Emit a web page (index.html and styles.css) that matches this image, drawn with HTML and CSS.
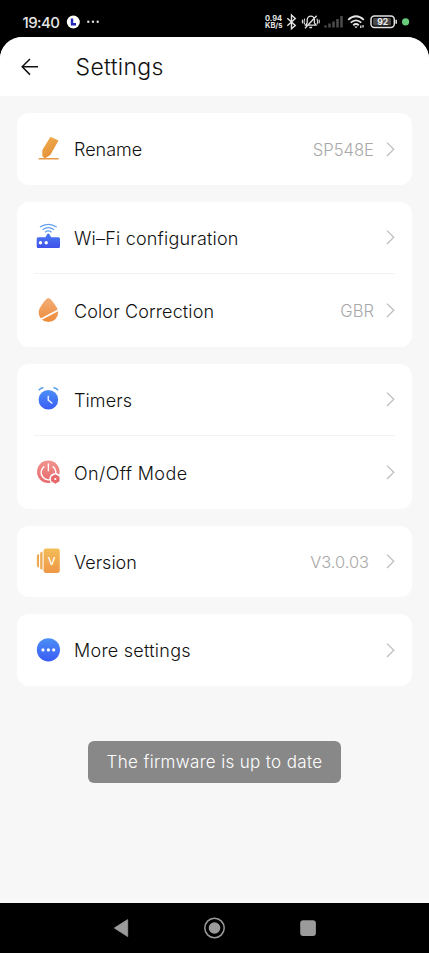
FILE: index.html
```html
<!DOCTYPE html>
<html lang="en">
<head>
<meta charset="utf-8">
<title>Settings</title>
<link rel="stylesheet" href="styles.css">
</head>
<body>
<svg class="defs" aria-hidden="true">
  <defs>
    <linearGradient id="orange" x1="0" y1="0" x2="0.5" y2="1"><stop offset="0" stop-color="#efb050"/><stop offset="1" stop-color="#e58f38"/></linearGradient>
    <linearGradient id="peach" x1="0" y1="0" x2="0" y2="1"><stop offset="0" stop-color="#f2ae78"/><stop offset="1" stop-color="#ee8b3a"/></linearGradient>
    <linearGradient id="gold" x1="0" y1="0" x2="0" y2="1"><stop offset="0" stop-color="#f3bd58"/><stop offset="1" stop-color="#ee9745"/></linearGradient>
    <linearGradient id="blue" x1="0" y1="0" x2="0" y2="1"><stop offset="0" stop-color="#4b8ff5"/><stop offset="1" stop-color="#3a5cf5"/></linearGradient>
    <linearGradient id="indigo" x1="0" y1="0" x2="0" y2="1"><stop offset="0" stop-color="#4a7cf2"/><stop offset="1" stop-color="#3f50ea"/></linearGradient>
    <linearGradient id="red" x1="0" y1="0" x2="0" y2="1"><stop offset="0" stop-color="#f09490"/><stop offset="1" stop-color="#e8686a"/></linearGradient>
    <symbol id="chevron" viewBox="0 0 9 16"><path d="M1 1.6 7.8 8.3 1 15" fill="none" stroke="#bcbcbc" stroke-width="1.2"/></symbol>
  </defs>
</svg>
<div class="status">
  <span class="time">19:40</span>
  <svg class="status-left" width="36" height="16" viewBox="0 0 36 16">
    <circle cx="7.3" cy="8" r="6.5" fill="#fff"/>
    <path d="M6 4.5v5.8h4" fill="none" stroke="#2027b8" stroke-width="2.4"/>
    <g fill="#ddd"><circle cx="22.3" cy="7.8" r="1.2"/><circle cx="27" cy="7.8" r="1.2"/><circle cx="31.7" cy="7.8" r="1.2"/></g>
  </svg>
  <div class="speed"><span>0.94</span><span>KB/s</span></div>
  <svg class="status-right" width="126" height="20" viewBox="285 12 126 20" fill="none" stroke="#e4e4e4">
    <path d="M287.3 18.2 295.3 25.4 291.5 28.8V15L295.3 18.4 287.3 25.8" stroke-width="1.4"/>
    <path d="M305.6 25.2H316l-1.6-2.3v-3.2a3.6 3.6 0 0 0-7.2 0v3.2zM309.3 27.5h2.8M305 28.3 316.6 15.8" stroke-width="1.3"/>
    <path d="M304.6 18.6q-1 3 0 5.8M302.6 19.7q-.6 1.8 0 3.6M317 18.6q1 3 0 5.8M319 19.7q.6 1.8 0 3.6" stroke-width="1.1"/>
    <path d="M325.5 27.6v-2.2M329.5 27.6v-4.2M333.5 27.6v-6.2M337.5 27.6v-8.6M341.5 27.6V16" stroke="#4c4c4c" stroke-width="2.5"/>
    <path d="M348.2 19.8q7.8-7 15.6 0M350.7 22.7q5.3-4.7 10.6 0M353.2 25.2q2.8-2.4 5.6 0" stroke-width="1.8"/>
    <path d="M356 28.2l-1.7-1.8h3.4z" fill="#e4e4e4" stroke="none"/>
    <path d="M360.8 28v-2.6M363 25v2.6" stroke-width="1.3"/>
    <rect x="371" y="16" width="23.3" height="11.4" rx="3.4" stroke-width="1.5"/>
    <rect x="373" y="18" width="18" height="7.4" rx="1.4" fill="#484848" stroke="none"/>
    <path d="M396.2 19.8v4" stroke-width="1.5"/>
    <text class="battery" x="382.7" y="25.1" text-anchor="middle">92</text>
    <circle cx="405.6" cy="21.8" r="3.6" fill="#69cc7b" stroke="none"/>
  </svg>
</div>

<main class="screen">
  <header class="header">
    <svg width="18" height="18" viewBox="0 0 18 18"><path d="M17 8.8H1.2M9 1 1.2 8.8 9 16.6" fill="none" stroke="#111" stroke-width="1.5"/></svg>
    <h1>Settings</h1>
  </header>

  <div class="list">
    <section class="card">
      <div class="row">
        <svg class="icon" viewBox="0 0 28 28"><path d="M17 2 24 5.2q.6.3.2.9L16.3 20 10.6 23.4 8.3 20.8V15L16 2.4q.4-.6 1-.4z" fill="url(#orange)"/><path d="M4.7 23.1h20v1.3h-20z" fill="#e79b45"/></svg>
        <span class="label rename">Rename</span><span class="value">SP548E</span>
        <svg class="chevron"><use href="#chevron"/></svg>
      </div>
    </section>

    <section class="card">
      <div class="row">
        <svg class="icon" viewBox="0 0 28 28"><g fill="none" stroke="#62a0ee" stroke-width="1.2"><path d="M5.9 3.9q8.4-5.2 16.8 0"/><path d="M8.6 6.7q5.7-4.2 11.4 0"/><path d="M11 9.2q3.3-2.6 6.6 0"/></g><path d="M4.2 14.2h7.3l1.6-3q1.2-1.3 2.4 0l1.6 3h7.4q1.5 0 1.5 1.5v7.8q0 1.5-1.5 1.5H4.2q-1.5 0-1.5-1.5v-7.8q0-1.5 1.5-1.5z" fill="url(#indigo)"/><circle cx="6.5" cy="19.8" r="1.7" fill="#fff"/><circle cx="12.2" cy="19.8" r="1.7" fill="#fff"/></svg>
        <span class="label wifi">Wi&#8211;Fi configuration</span>
        <svg class="chevron"><use href="#chevron"/></svg>
      </div>
      <div class="row">
        <svg class="icon" viewBox="0 0 28 28"><path d="M14.4 2Q12.8 2 10.6 5 4.6 12.4 4.6 16.3A9.8 9.7 0 0 0 24.2 16.3Q24.2 12.4 18.2 5 16 2 14.4 2z" fill="url(#peach)"/><path d="M6.5 23.4 25.5 13.6" stroke="#fff" stroke-width="1.7"/></svg>
        <span class="label color">Color Correction</span><span class="value">GBR</span>
        <svg class="chevron"><use href="#chevron"/></svg>
      </div>
    </section>

    <section class="card">
      <div class="row">
        <svg class="icon" viewBox="0 0 28 28"><circle cx="14.4" cy="14.8" r="9.8" fill="url(#blue)"/><path d="M4.7 5.2Q6.5 3.3 9.4 2.6M19.4 2.6Q22.3 3.3 24.1 5.2" fill="none" stroke="#5ba2ef" stroke-width="1.5"/><path d="M14.3 10.7v4.5l4.1 3.3" fill="none" stroke="#e5ecff" stroke-width="1.5"/></svg>
        <span class="label timers">Timers</span>
        <svg class="chevron"><use href="#chevron"/></svg>
      </div>
      <div class="row">
        <svg class="icon" viewBox="0 0 28 28"><circle cx="14.3" cy="13.8" r="11.3" fill="url(#red)"/><path d="M10.4 8.3a7.4 7.4 0 1 0 8.2 0M14.4 5.6v7.6" fill="none" stroke="#fff" stroke-width="1.4"/><circle cx="21.3" cy="21" r="6" fill="#fff"/><path d="M21.3 16.8 25 18.9V23.1L21.3 25.2 17.6 23.1V18.9z" fill="#e8696b" stroke="#e8696b" stroke-linejoin="round"/><circle cx="21.3" cy="21" r="1.1" fill="#fff"/></svg>
        <span class="label mode">On/Off Mode</span>
        <svg class="chevron"><use href="#chevron"/></svg>
      </div>
    </section>

    <section class="card">
      <div class="row">
        <svg class="icon" viewBox="0 0 28 28"><rect x="9.6" y="1.6" width="16.2" height="24.3" rx="2.6" fill="url(#gold)"/><path d="M6.2 5.8 8.5 4.6V22.9L6.2 21.7zM2.9 8.2 5 6.8V20.7L2.9 19.3z" fill="#eda850"/><text class="icon-v" x="17.6" y="17.7" text-anchor="middle">V</text></svg>
        <span class="label version">Version</span><span class="value number">V3.0.03</span>
        <svg class="chevron"><use href="#chevron"/></svg>
      </div>
    </section>

    <section class="card">
      <div class="row">
        <svg class="icon" viewBox="0 0 28 28"><circle cx="14.4" cy="13.8" r="11.6" fill="url(#blue)"/><g fill="#fff"><circle cx="9" cy="13.9" r="1.6"/><circle cx="14.4" cy="13.9" r="1.6"/><circle cx="19.7" cy="13.9" r="1.6"/></g></svg>
        <span class="label more">More settings</span>
        <svg class="chevron"><use href="#chevron"/></svg>
      </div>
    </section>
  </div>

  <div class="toast">The firmware is up to date</div>
</main>

<nav class="nav">
  <svg width="429" height="50" viewBox="0 903 429 50"><path d="M114.3 928 127.7 919.6V936.6z" fill="#9b9b9b" stroke="#9b9b9b" stroke-width=".8" stroke-linejoin="round"/><circle cx="214.5" cy="928" r="9.7" fill="none" stroke="#9b9b9b" stroke-width="1.5"/><circle cx="214.5" cy="928" r="5.8" fill="#9b9b9b"/><rect x="300.2" y="920.2" width="15.7" height="15.7" rx="3" fill="#9b9b9b"/></svg>
</nav>
</body>
</html>
```
FILE: styles.css
```css
* { box-sizing: border-box; }

body {
  margin: 0;
  width: 429px;
  height: 953px;
  display: flex;
  flex-direction: column;
  background: #000;
  color: #111;
  font-family: Inter, "Noto Sans", sans-serif;
  overflow: hidden;
}

svg { display: block; flex: none; }
.defs { position: absolute; width: 0; height: 0; }

.status {
  height: 37px;
  padding: 7px 18px 0 22.5px;
  display: flex;
  align-items: center;
  color: #e6e6e6;
}
.time { width: 43.5px; font-size: 15px; font-weight: 500; letter-spacing: -0.6px; }
.speed {
  margin-left: auto;
  width: 20px;
  display: flex;
  flex-direction: column;
  font-size: 7.5px;
  line-height: 7.3px;
  font-weight: 700;
  white-space: nowrap;
}
.battery { font-size: 8.6px; font-weight: 700; fill: #eee; stroke: none; }

.screen {
  height: 866px;
  background: #f7f7f7;
  border-radius: 22px 22px 0 0;
  overflow: hidden;
}
.header {
  height: 59px;
  padding-left: 21px;
  display: flex;
  align-items: center;
  gap: 36.6px;
  background: #fff;
}
.header h1 {
  margin: 0;
  padding-top: 1px;
  font-size: 23px;
  font-weight: 350;
  line-height: 30px;
  letter-spacing: 0.3px;
}

.list {
  padding: 17px 17px 0;
  display: flex;
  flex-direction: column;
  gap: 17px;
}
.card { padding: 0 17px; background: #fff; border-radius: 12px; }
.row { height: 71.6px; display: flex; align-items: center; }
.row + .row { height: 73.4px; border-top: 1.5px solid #f3f3f3; }
.icon { width: 28px; height: 28px; }
.icon-v { font-size: 11px; font-weight: 500; fill: #fff; }
.label {
  margin-left: 12px;
  padding-top: 3px;
  font-size: 18px;
  font-weight: 350;
  line-height: 24px;
  white-space: nowrap;
}
.wifi { letter-spacing: 0.2px; }
.color { letter-spacing: 0.13px; }
.timers { letter-spacing: 0.1px; }
.mode { letter-spacing: 0.38px; }
.more { letter-spacing: 0.25px; }
.value {
  margin-left: auto;
  margin-right: 12px;
  padding-top: 2px;
  color: #a8a8a8;
  font-size: 16.6px;
  font-weight: 300;
}
.number { margin-right: 17px; font-size: 16.4px; }
.chevron { width: 9px; height: 16px; margin-left: auto; }
.value + .chevron { margin-left: 0; }

.toast {
  width: 253px;
  height: 42px;
  margin: 55px auto 0;
  padding-top: 1px;
  display: flex;
  align-items: center;
  justify-content: center;
  border-radius: 6px;
  background: #888;
  color: #fff;
  font-size: 17px;
  font-weight: 350;
  letter-spacing: 0.35px;
  white-space: nowrap;
}
.nav { height: 50px; }
```
